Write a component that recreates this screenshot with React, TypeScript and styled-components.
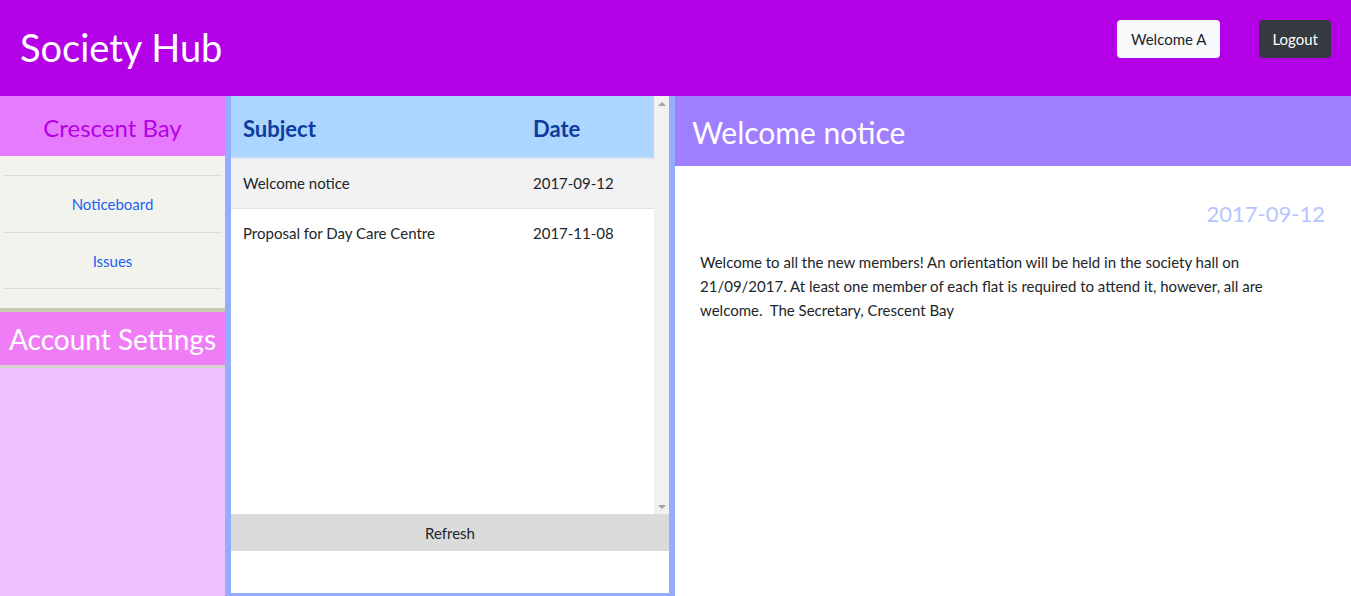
import React from "react";
import styled, { createGlobalStyle } from "styled-components";

const GlobalStyle = createGlobalStyle`
  html, body { margin: 0; padding: 0; }
  body { font-family: Lato, "Noto Sans", sans-serif; background: #fff; color: #212529; }
  * { box-sizing: border-box; }
`;

const Page = styled.div`
  width: 1351px;
  height: 596px;
  display: flex;
  flex-direction: column;
  overflow: hidden;
`;

const TopBar = styled.header`
  height: 96px;
  flex: none;
  background: #b300e6;
  display: flex;
  align-items: center;
  padding: 0 20px;
`;

const Brand = styled.h1`
  margin: 0;
  font-weight: 400;
  font-size: 38px;
  color: #fff;
  flex: 1;
  position: relative;
  top: -1px;
`;

const NavButton = styled.button<{ $dark?: boolean }>`
  height: 38px;
  padding: 0 ${(p) => (p.$dark ? "13px" : "14px")};
  border: none;
  border-radius: 4px;
  font-family: Lato, sans-serif;
  font-size: 15px;
  background: ${(p) => (p.$dark ? "#343a40" : "#f8f9fa")};
  color: ${(p) => (p.$dark ? "#fff" : "#212529")};
  margin-left: ${(p) => (p.$dark ? "39px" : "0")};
  margin-bottom: 18px;
`;

const Main = styled.div`
  flex: 1;
  display: flex;
  min-height: 0;
`;

const Sidebar = styled.aside`
  width: 225px;
  flex: none;
  display: flex;
  flex-direction: column;
  background: #efc2fe;
`;

const SideTitle = styled.div<{ $variant: "society" | "account" }>`
  height: ${(p) => (p.$variant === "society" ? "60px" : "56px")};
  display: flex;
  align-items: center;
  justify-content: center;
  padding-top: ${(p) => (p.$variant === "society" ? "2px" : "0")};
  background: ${(p) => (p.$variant === "society" ? "#e67cfd" : "#ef7ef6")};
  color: ${(p) => (p.$variant === "society" ? "#b300e6" : "#fff")};
  font-size: ${(p) => (p.$variant === "society" ? "24px" : "28px")};
  border-bottom: ${(p) => (p.$variant === "account" ? "3px solid #d4d2c8" : "none")};
`;

const SideNav = styled.nav`
  background: #f3f3ee;
  padding: 19px 3px 19px;
  border-bottom: 4px solid #c9c9b0;
  display: flex;
  flex-direction: column;
`;

const SideLink = styled.a`
  display: flex;
  align-items: center;
  justify-content: center;
  height: 57px;
  border-top: 1px solid #dcdcd6;
  color: #1a62f0;
  font-size: 15px;
  text-decoration: none;
  &:last-child { border-bottom: 1px solid #dcdcd6; }
`;

const ListPanel = styled.section`
  width: 450px;
  flex: none;
  border: 6px solid #94adff;
  border-top: none;
  border-bottom-width: 3px;
  display: flex;
  flex-direction: column;
  background: #fff;
`;

const ListViewport = styled.div`
  height: 418px;
  flex: none;
  display: flex;
`;

const ListContent = styled.div`
  flex: 1;
  overflow: hidden;
  background: #fff;
`;

const ScrollTrack = styled.div`
  width: 15px;
  flex: none;
  background: #f1f1f1;
  display: flex;
  flex-direction: column;
  justify-content: space-between;
  align-items: center;
  padding: 6px 0 5px;
`;

const ScrollArrow = styled.span<{ $down?: boolean }>`
  width: 0;
  height: 0;
  border-left: 4px solid transparent;
  border-right: 4px solid transparent;
  ${(p) =>
    p.$down ? "border-top: 4px solid #a3a3a3;" : "border-bottom: 4px solid #a3a3a3;"}
`;

const Table = styled.table`
  width: 100%;
  border-collapse: collapse;
`;

const HeadCell = styled.th<{ $w?: string }>`
  background: #acd5ff;
  color: #0d3b9e;
  font-size: 22px;
  font-weight: 700;
  text-align: left;
  height: 62px;
  padding: 4px 12px 0;
  border-bottom: 2px solid #d2e2f2;
  width: ${(p) => p.$w || "auto"};
`;

const Row = styled.tr<{ $active?: boolean }>`
  background: ${(p) => (p.$active ? "#f2f2f2" : "#fff")};
  &:last-child td { border-bottom: none; }
`;

const Cell = styled.td`
  font-size: 15px;
  color: #212529;
  height: 50px;
  padding: 0 12px;
  border-bottom: 1px solid #dee2e6;
`;

const RefreshBar = styled.button`
  height: 37px;
  flex: none;
  border: none;
  background: #dbdbdb;
  font-family: Lato, sans-serif;
  font-size: 15px;
  color: #212529;
`;

const Detail = styled.section`
  flex: 1;
  display: flex;
  flex-direction: column;
  background: #fff;
`;

const DetailHead = styled.div`
  height: 70px;
  background: #a07fff;
  color: #fff;
  font-size: 30px;
  display: flex;
  align-items: center;
  padding: 2px 17px 0;
`;

const DetailBody = styled.div`
  padding: 34px 26px 0 25px;
`;

const DetailDate = styled.div`
  text-align: right;
  color: #b3c6ff;
  font-size: 22px;
  margin-bottom: 23px;
`;

const DetailText = styled.p`
  margin: 0;
  font-size: 15px;
  line-height: 24px;
  color: #212529;
  white-space: pre-wrap;
`;

const notices = [
  { subject: "Welcome notice", date: "2017-09-12", active: true },
  { subject: "Proposal for Day Care Centre", date: "2017-11-08", active: false },
];

export default function App() {
  return (
    <Page>
      <GlobalStyle />
      <TopBar>
        <Brand>Society Hub</Brand>
        <NavButton>Welcome A</NavButton>
        <NavButton $dark>Logout</NavButton>
      </TopBar>
      <Main>
        <Sidebar>
          <SideTitle $variant="society">Crescent Bay</SideTitle>
          <SideNav>
            <SideLink href="#">Noticeboard</SideLink>
            <SideLink href="#">Issues</SideLink>
          </SideNav>
          <SideTitle $variant="account">Account Settings</SideTitle>
        </Sidebar>
        <ListPanel>
          <ListViewport>
            <ListContent>
              <Table>
                <thead>
                  <tr>
                    <HeadCell $w="290px">Subject</HeadCell>
                    <HeadCell>Date</HeadCell>
                  </tr>
                </thead>
                <tbody>
                  {notices.map((n) => (
                    <Row key={n.subject} $active={n.active}>
                      <Cell>{n.subject}</Cell>
                      <Cell>{n.date}</Cell>
                    </Row>
                  ))}
                </tbody>
              </Table>
            </ListContent>
            <ScrollTrack>
              <ScrollArrow />
              <ScrollArrow $down />
            </ScrollTrack>
          </ListViewport>
          <RefreshBar>Refresh</RefreshBar>
        </ListPanel>
        <Detail>
          <DetailHead>Welcome notice</DetailHead>
          <DetailBody>
            <DetailDate>2017-09-12</DetailDate>
            <DetailText>
              {"Welcome to all the new members! An orientation will be held in the society hall on 21/09/2017. At least one member of each flat is required to attend it, however, all are welcome.  The Secretary, Crescent Bay"}
            </DetailText>
          </DetailBody>
        </Detail>
      </Main>
    </Page>
  );
}
